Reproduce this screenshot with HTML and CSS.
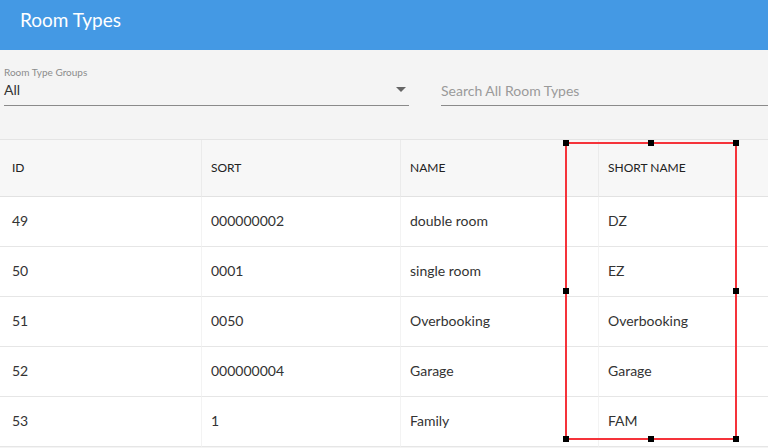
FILE: index.html
```html
<!DOCTYPE html>
<html>
<head>
<meta charset="utf-8">
<link rel="stylesheet" href="styles.css">
</head>
<body>
<header class="topbar"><h1 class="title">Room Types</h1></header>
<section class="filters">
  <div class="select">
    <div class="select-label">Room Type Groups</div>
    <div class="select-field"><span class="select-value">All</span><span class="caret"></span></div>
  </div>
  <div class="search">
    <div class="search-field">Search All Room Types</div>
  </div>
</section>
<div class="table-wrap">
  <div class="table">
    <div class="cell head c1">ID</div>
    <div class="cell head">SORT</div>
    <div class="cell head">NAME</div>
    <div class="cell head">SHORT NAME</div>

    <div class="cell c1">49</div><div class="cell">000000002</div><div class="cell">double room</div><div class="cell">DZ</div>
    <div class="cell c1">50</div><div class="cell">0001</div><div class="cell">single room</div><div class="cell">EZ</div>
    <div class="cell c1">51</div><div class="cell">0050</div><div class="cell">Overbooking</div><div class="cell">Overbooking</div>
    <div class="cell c1">52</div><div class="cell">000000004</div><div class="cell">Garage</div><div class="cell">Garage</div>
    <div class="cell c1">53</div><div class="cell">1</div><div class="cell">Family</div><div class="cell">FAM</div>
  </div>
  <div class="selection">
    <span class="handle tl"></span><span class="handle tm"></span><span class="handle tr"></span>
    <span class="handle ml"></span><span class="handle mr"></span>
    <span class="handle bl"></span><span class="handle bm"></span><span class="handle br"></span>
  </div>
</div>
</body>
</html>
```
FILE: styles.css
```css
html, body {
  margin: 0;
  padding: 0;
  background: #f4f4f4;
  font-family: Lato, "Noto Sans", sans-serif;
  color: #333;
  overflow: hidden;
}
.topbar {
  height: 50px;
  background: #4499e4;
  padding-left: 20px;
  box-sizing: border-box;
}
.title {
  margin: 0;
  font-weight: 400;
  font-size: 19px;
  line-height: 39px;
  color: #fff;
}
.filters {
  display: flex;
  gap: 32px;
  padding: 15px 0 0 4px;
  height: 89px;
  box-sizing: border-box;
}
.select {
  width: 405px;
}
.select-label {
  font-size: 10px;
  color: #8c8c8c;
  line-height: 14px;
}
.select-field {
  display: flex;
  align-items: center;
  justify-content: space-between;
  height: 27px;
  padding-bottom: 5px;
  box-sizing: border-box;
  border-bottom: 1px solid #8a8a8a;
}
.select-value {
  font-size: 14px;
  color: #333;
}
.caret {
  width: 0;
  height: 0;
  border-left: 5px solid transparent;
  border-right: 5px solid transparent;
  border-top: 5px solid #666;
  margin-right: 3px;
}
.search {
  flex: 1;
  padding-top: 14px;
}
.search-field {
  height: 26px;
  line-height: 24px;
  font-size: 14px;
  color: #9a9a9a;
  border-bottom: 1px solid #8a8a8a;
}
.table-wrap {
  position: relative;
}
.table {
  display: grid;
  grid-template-columns: 201px 199px 198px 199px;
  grid-template-rows: 57px repeat(5, 50px);
  border-top: 1px solid #e4e4e4;
  background: #fff;
  width: 797px;
}
.cell {
  display: flex;
  align-items: center;
  padding-left: 9px;
  padding-bottom: 2px;
  font-size: 14px;
  color: #333;
  border-left: 1px solid #f3f3f3;
  border-bottom: 1px solid #e6e6e6;
}
.cell.c1 {
  padding-left: 12px;
  border-left: none;
}
.cell.head {
  background: #f7f7f7;
  font-size: 12px;
  color: #222;
  border-left-color: #ebebeb;
  border-bottom-color: #e2e2e2;
}
.selection {
  position: absolute;
  left: 565px;
  top: 3px;
  width: 168px;
  height: 294px;
  border: 2px solid #f5333a;
}
.handle {
  position: absolute;
  width: 6px;
  height: 6px;
  background: #000;
}
.tl { left: -4px; top: -4px; }
.tm { left: 81px; top: -4px; }
.tr { right: -4px; top: -4px; }
.ml { left: -4px; top: 144px; }
.mr { right: -4px; top: 144px; }
.bl { left: -4px; bottom: -4px; }
.bm { left: 81px; bottom: -4px; }
.br { right: -4px; bottom: -4px; }
```
